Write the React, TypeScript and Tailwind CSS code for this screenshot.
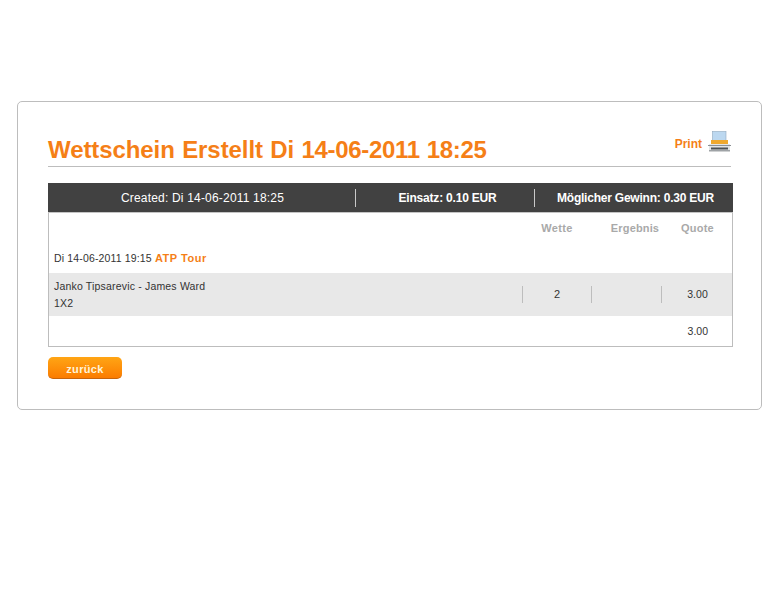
export default function App() {
  return (
    <div className="w-[768px] h-[614px] bg-white pt-[101px] pl-[17px] font-['Liberation_Sans',Arial,sans-serif] overflow-hidden">
      <div className="w-[745px] h-[309px] border border-[#bdbdbd] rounded-[5px] pl-[30px] pt-[31px]">
        <div className="w-[683px] h-[34px] border-b border-[#bdbdbd] flex justify-between">
          <h1 className="text-[24px] leading-[34px] font-bold text-[#f57f17] tracking-[-0.08px] [word-spacing:0.8px]">Wettschein Erstellt Di <span className="tracking-[-0.33px]">14-06-2011 18:25</span></h1>
          <div className="flex items-start -mt-[2px]">
            <span className="text-[12px] leading-[24px] font-bold text-[#f57f17] mr-[6px] mt-[1px]">Print</span>
            <svg width="23" height="21" viewBox="0 0 23 21">
              <rect x="4.5" y="0.5" width="13.5" height="10" fill="#bcd8f0" stroke="#8fa9bf" strokeWidth="0.6" />
              <rect x="3" y="9" width="17" height="5" fill="#efa82e" />
              <path d="M1 13h21v6H1z" fill="#e2e4e6" />
              <path d="M0 14h23v1H0z" fill="#8b9094" />
              <rect x="3" y="16.5" width="17" height="2" fill="#4c5154" />
              <rect x="1" y="19" width="21" height="1.5" fill="#9fa3a6" />
            </svg>
          </div>
        </div>
        <div className="mt-[16px] w-[685px] h-[30px] bg-[#414141] flex items-center text-[12px] text-white border-b border-[#c4c4c4]">
          <div className="w-[308px] h-[18px] border-r border-[#c9c9c9] flex items-center justify-center leading-none tracking-[0.19px] pl-[2px]">Created: Di 14-06-2011 18:25</div>
          <div className="w-[179px] h-[18px] border-r border-[#c9c9c9] flex items-center justify-center font-bold leading-none tracking-[-0.2px] pl-[5px]">Einsatz: 0.10 EUR</div>
          <div className="flex-1 h-[18px] flex items-center justify-center font-bold leading-none pl-[3px] tracking-[-0.22px]">Möglicher Gewinn: 0.30 EUR</div>
        </div>
        <div className="w-[685px] h-[134px] border-x border-b border-[#bdbdbd]">
          <div className="h-[30px] flex justify-end text-[11px] font-bold text-[#a9a9a9] leading-[30px]">
            <span className="w-[68px] text-center mr-[18px] tracking-[0.4px]">Wette</span>
            <span className="w-[52px] text-center mr-[3px] tracking-[0.15px]">Ergebnis</span>
            <span className="w-[67px] text-center mr-[1px] tracking-[0.02em]">Quote</span>
          </div>
          <div className="h-[30px] pl-[5px] pt-[7px] text-[10.5px] leading-[16px] text-[#333] tracking-[0.15px]">
            Di 14-06-2011 19:15 <span className="text-[11px] font-bold text-[#f57f17] tracking-[0.55px]">ATP Tour</span>
          </div>
          <div className="h-[43px] bg-[#e8e8e8] flex items-center text-[10.5px] text-[#333]">
            <div className="flex-1 pl-[5px] leading-[17px] tracking-[0.18px]">
              <div>Janko Tipsarevic - James Ward</div>
              <div>1X2</div>
            </div>
            <div className="w-[69px] h-[17px] border-l border-[#bdbdbd] flex items-center justify-center text-[11px]">2</div>
            <div className="w-[70px] h-[17px] border-l border-[#bdbdbd]"></div>
            <div className="w-[71px] h-[17px] border-l border-[#bdbdbd] flex items-center justify-center pl-[1px]">3.00</div>
          </div>
          <div className="h-[30px] pt-[1px] flex justify-end items-center text-[10.5px] text-[#333] pr-[24px]">3.00</div>
        </div>
        <button className="mt-[10px] block w-[74px] h-[22px] rounded-[5px] bg-gradient-to-b from-[#ffa514] to-[#fb7c00] border-b border-[#c8640a] text-[11px] font-bold text-[#fff4d8] tracking-[0.03em] leading-none pt-[3px]">zurück</button>
      </div>
    </div>
  );
}
